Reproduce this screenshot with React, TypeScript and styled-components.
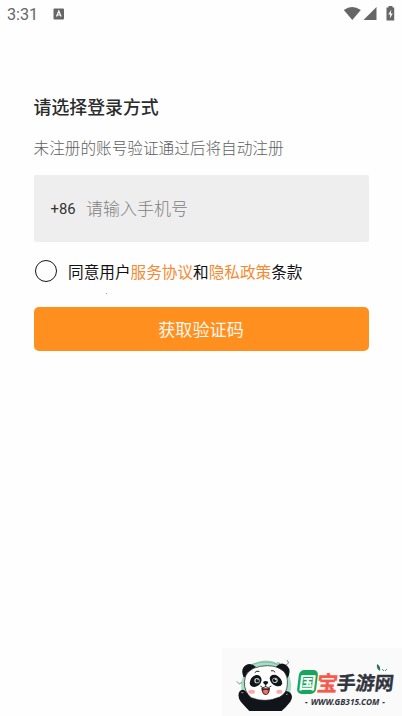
import React from "react";
import styled, { createGlobalStyle } from "styled-components";

const Global = createGlobalStyle`
  * { box-sizing: border-box; }
  html, body { margin: 0; background: #fefefe; }
  button { font: inherit; border: 0; padding: 0; }
`;

const Screen = styled.div`
  position: relative;
  width: 402px;
  height: 716px;
  overflow: hidden;
  background: #fefefe;
  font-family: Roboto, "Noto Sans CJK SC", sans-serif;
  white-space: nowrap;
`;

const StatusBar = styled.header`
  display: flex;
  align-items: center;
  height: 28px;
  padding: 0 7px;
  color: #666;
`;

const Clock = styled.time`
  width: 46px;
  padding-top: 1px;
  font-size: 16.2px;
  line-height: 28px;
`;

const StatusIcons = styled.div`
  display: flex;
  margin-left: auto;
`;

const LoginForm = styled.main`
  display: flex;
  flex-direction: column;
  margin: 67px 33.5px 0;
`;

const Title = styled.h1`
  margin: 0;
  font-size: 17.9px;
  font-weight: 500;
  line-height: 26px;
  color: #2b2b2b;
`;

const Subtitle = styled.p`
  margin: 16px 0 0;
  font-size: 15.63px;
  font-weight: 300;
  line-height: 24px;
  color: #606060;
`;

const PhoneField = styled.div`
  display: flex;
  align-items: center;
  height: 67px;
  margin-top: 14px;
  padding-left: 17px;
  background: #eee;
  border-radius: 2px;
`;

const CountryCode = styled.span`
  width: 35.5px;
  font-size: 14.8px;
  color: #333;
`;

const Placeholder = styled.span`
  padding-top: 1px;
  font-size: 17px;
  font-weight: 300;
  line-height: 26px;
  color: #808080;
`;

const Agreement = styled.div`
  display: flex;
  align-items: center;
  height: 24px;
  margin-top: 17px;
  font-size: 15.63px;
  color: #111;
`;

const Radio = styled.span`
  width: 22px;
  height: 22px;
  margin: 0 11.5px 0 1px;
  border: 1.5px solid #151515;
  border-radius: 50%;
`;

const Policy = styled.a`
  color: #f68a32;
`;

const Speck = styled.i`
  width: 1px;
  height: 1px;
  margin: 10px 0 0 72.5px;
  background: #999;
`;

const Submit = styled.button`
  height: 44px;
  margin-top: 13px;
  border-radius: 5px;
  background: #ff8f1f;
  color: #fff8ec;
  font-size: 17.1px;
  line-height: 46px;
`;

const Watermark = styled.aside`
  position: absolute;
  right: 0;
  bottom: 0;
  display: flex;
  width: 180px;
  height: 68px;
  padding: 12px 0 0 13px;
  background: #fafafa;
`;

const Brand = styled.div`
  padding-left: 1px;
`;

const BrandName = styled.div`
  display: flex;
  align-items: center;
  height: 26px;
  margin-top: 9px;
  transform: skewX(-7deg);
  font-family: "Noto Sans CJK SC", sans-serif;
  font-weight: 700;
  line-height: 26px;
`;

const BrandGlyph = styled.span<{ $color: string; $size: number; $width: number; $filled?: boolean }>`
  width: ${(p) => p.$width}px;
  height: 24px;
  line-height: 24px;
  font-size: ${(p) => p.$size}px;
  color: ${(p) => (p.$filled ? "#fff" : p.$color)};
  background: ${(p) => (p.$filled ? p.$color : "transparent")};
  border-radius: 5px;
  text-align: center;
  -webkit-text-stroke: ${(p) => (p.$filled ? "0" : `0.3px ${p.$color}`)};
`;

const Site = styled.div`
  display: flex;
  justify-content: space-between;
  width: 80px;
  margin: 1px 0 0 7px;
  font: italic 700 8.3px/12px "Noto Sans", sans-serif;
  color: #30343d;
`;

const Leaves = styled.svg`
  position: absolute;
  right: 12px;
  top: 16px;
`;

function Panda() {
  return (
    <svg width="62" height="52" viewBox="60 60 186 156" fill="none">
      <path d="M84 166A75 76 0 1 1 223 166Z" fill="#a9dcc7" />
      <path d="M111 74Q150 58 188 73" stroke="#79bea4" strokeWidth="4" />
      <path d="M65 124l8 8 8-5M187 67l10 5M211 76l10-7-5-9" stroke="#355f55" strokeWidth="2" />
      <path d="M86 112Q75 88 92 76Q107 66 122 80L108 108ZM183 80Q201 62 217 78Q230 92 218 114Z" fill="#111418" />
      <path d="M103 213Q93 203 78 186Q66 170 73 155Q82 144 91 153L107 172Q151 186 194 170L202 156Q214 149 226 158Q236 171 226 185Q212 203 200 213Z" fill="#111418" />
      <path d="M88 126Q90 86 137 79Q181 71 206 94Q219 108 217 132Q217 159 194 171Q151 190 109 173Q88 157 88 126Z" fill="#fff" stroke="#15191d" strokeWidth="2" />
      <path d="M104 130Q105 111 123 105Q138 104 140 120Q137 137 119 141Q105 141 104 130ZM164 115Q166 102 183 105Q201 115 202 131Q197 142 183 138Q166 132 164 115Z" fill="#111418" />
      <path d="M120 97q5-6 12-3M169 92q7-2 11 4" stroke="#222" strokeWidth="3" strokeLinecap="round" />
      <circle cx="126" cy="122" r="8" fill="#d7dedd" />
      <circle cx="180" cy="121" r="8" fill="#d7dedd" />
      <circle cx="127" cy="122" r="5.5" fill="#111418" />
      <circle cx="179" cy="121" r="5.5" fill="#111418" />
      <circle cx="129" cy="119" r="2" fill="#fff" />
      <circle cx="181" cy="118" r="2" fill="#fff" />
      <path d="M144 126Q152 120 160 126Q158 134 152 135Q146 133 144 126Z" fill="#111418" />
      <path d="M152 133v8M136 138q8 9 16 2q9 7 17-2" stroke="#111418" strokeWidth="2.5" />
      <path d="M139 143Q152 147 165 143Q164 164 152 165Q140 163 139 143Z" fill="#461e25" />
      <path d="M143 152Q152 146 161 152Q157 163 152 163Q146 162 143 152Z" fill="#f26e67" />
      <ellipse cx="110" cy="155" rx="10" ry="6" fill="#ffaaa4" />
      <ellipse cx="193" cy="155" rx="9" ry="6" fill="#ffaaa4" />
      <path d="M79 158h6M213 164l5-2" stroke="#b39a9b" strokeWidth="3" />
    </svg>
  );
}

export default function App() {
  return (
    <Screen>
      <Global />
      <StatusBar>
        <Clock>3:31</Clock>
        <svg width="12" height="12" viewBox="0 0 12 12">
          <rect x=".5" y=".5" width="10.5" height="11" rx="1" fill="#666" />
          <path d="M3.5 8.5 5.8 3l2.3 5.5M4.4 7h2.8" stroke="#fff" strokeWidth="1.2" fill="none" />
        </svg>
        <StatusIcons>
          <svg width="52" height="18" viewBox="0 0 52 18" fill="#666">
            <path d="M.8 5Q9 -1 17.8 5L9.3 15Z" />
            <path d="M20.5 15 33.5 2v13Z" />
            <path d="M43.5 2.5h2V1h4v1.5h1.7v13h-7.7Z" />
            <path d="M48.3 4.7 45.2 9.5h2.1l-.5 4 3-5h-2Z" fill="#fff" />
          </svg>
        </StatusIcons>
      </StatusBar>
      <LoginForm>
        <Title>请选择登录方式</Title>
        <Subtitle>未注册的账号验证通过后将自动注册</Subtitle>
        <PhoneField>
          <CountryCode>+86</CountryCode>
          <Placeholder>请输入手机号</Placeholder>
        </PhoneField>
        <Agreement>
          <Radio />
          <span>同意用户<Policy>服务协议</Policy>和<Policy>隐私政策</Policy>条款</span>
        </Agreement>
        <Speck />
        <Submit>获取验证码</Submit>
      </LoginForm>
      <Watermark>
        <Panda />
        <Brand>
          <BrandName>
            <BrandGlyph $color="#18a55c" $size={17} $width={19} $filled>国</BrandGlyph>
            <BrandGlyph $color="#f45b4c" $size={21} $width={20}>宝</BrandGlyph>
            <BrandGlyph $color="#30343d" $size={19} $width={57}>手游网</BrandGlyph>
          </BrandName>
          <Site><span>-</span><span>WWW.GB315.COM</span><span>-</span></Site>
        </Brand>
        <Leaves width="14" height="10" viewBox="0 0 14 10">
          <path d="M1 0Q5 2 4 7Q0 5 1 0Z" fill="#24765c" />
          <path d="M6 5l2 2M9 7l2-2" stroke="#568a78" />
        </Leaves>
      </Watermark>
    </Screen>
  );
}
